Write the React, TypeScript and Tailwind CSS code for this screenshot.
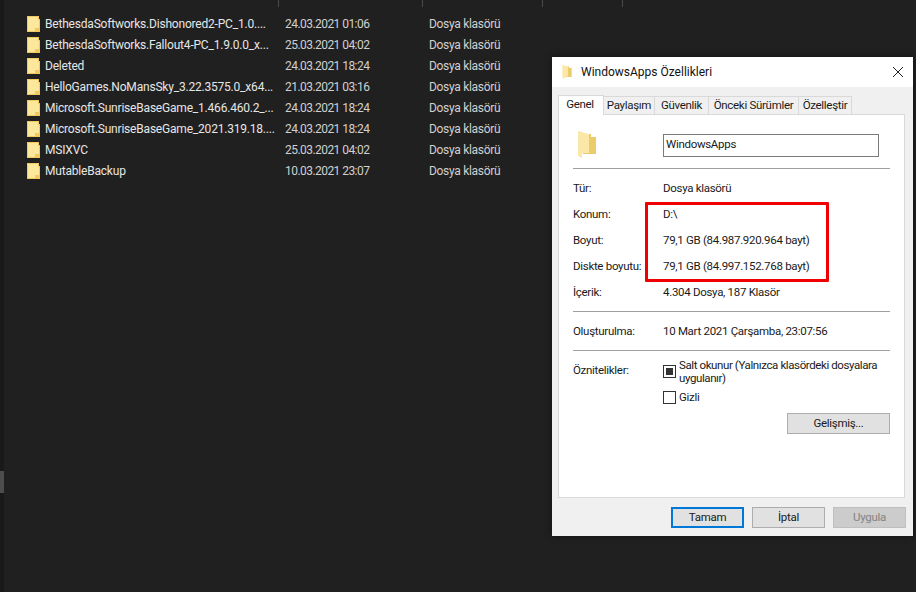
const font = "font-['Roboto','Noto_Sans',sans-serif]";

const files = [
  ["BethesdaSoftworks.Dishonored2-PC_1.0....", "24.03.2021 01:06"],
  ["BethesdaSoftworks.Fallout4-PC_1.9.0.0_x...", "25.03.2021 04:02"],
  ["Deleted", "24.03.2021 18:24"],
  ["HelloGames.NoMansSky_3.22.3575.0_x64...", "21.03.2021 03:16"],
  ["Microsoft.SunriseBaseGame_1.466.460.2_...", "24.03.2021 18:24"],
  ["Microsoft.SunriseBaseGame_2021.319.18....", "24.03.2021 18:24"],
  ["MSIXVC", "25.03.2021 04:02"],
  ["MutableBackup", "10.03.2021 23:07"],
];

function RowFolder() {
  return (
    <svg width="13" height="16" viewBox="0 0 13 16" className="shrink-0">
      <path d="M0 0H12V3H13V16H0Z" fill="#f3c95f" />
      <path d="M1 1H11V4H12V12H8V15H1Z" fill="#fde79a" />
    </svg>
  );
}

function SideFolder({ w, h }: { w: number; h: number }) {
  return (
    <svg width={w} height={h} viewBox="0 0 18 27">
      <path d="M5 3H13V6H18V23H5Z" fill="#eccb6c" />
      <path d="M0 0L11 3V22H4V27L0 25Z" fill="#fbe8a6" />
    </svg>
  );
}

function Info({ label, value, cls = "" }: { label: string; value: string; cls?: string }) {
  return (
    <div className={`flex items-center h-[26px] ${cls}`}>
      <span className="w-[90px] shrink-0 whitespace-nowrap">{label}</span>
      <span className="whitespace-nowrap">{value}</span>
    </div>
  );
}

function Tab({ label, w }: { label: string; w: string }) {
  return (
    <div className={`${w} h-[18px] flex items-center justify-center whitespace-nowrap bg-[#f0f0f0] border border-b-0 border-[#d9d9d9] -ml-px`}>
      {label}
    </div>
  );
}

function Btn({ label, cls = "" }: { label: string; cls?: string }) {
  return (
    <div className={`w-[73px] h-[21px] flex items-center justify-center ${cls}`}>{label}</div>
  );
}

export default function App() {
  return (
    <div className={`${font} relative flex w-[916px] h-[592px] overflow-hidden bg-[#202020] text-[12px]`}>
      <div className="w-[4px] h-full bg-[#191919] flex flex-col shrink-0">
        <div className="h-[471px]" />
        <div className="h-[22px] bg-[#4d4d4d]" />
      </div>
      <div className="flex-1 flex flex-col">
        <div className="flex h-[7px] shrink-0">
          <div className="w-[275px] border-r border-[#4a4a4a]" />
          <div className="w-[144px] border-r border-[#4a4a4a]" />
          <div className="w-[120px] border-r border-[#4a4a4a]" />
          <div className="w-[80px] border-r border-[#4a4a4a]" />
        </div>
        <div className="flex flex-col pt-[6px] pl-[23px]">
          {files.map(([name, date]) => (
            <div key={name} className="flex items-center h-[21px] text-[#e6e6e6]">
              <div className="w-[18px] flex"><RowFolder /></div>
              <span className="w-[240px] whitespace-nowrap tracking-[-0.2px]">{name}</span>
              <span className="w-[144px] text-[#d0d0d0] tracking-[-0.55px]">{date}</span>
              <span className="text-[#d0d0d0] tracking-[-0.3px]">Dosya klasörü</span>
            </div>
          ))}
        </div>
      </div>

      <div className="absolute left-[552px] top-[57px] w-[361px] h-[479px] flex flex-col bg-[#f0f0f0] text-[#1a1a1a] shadow-[0_0_6px_rgba(0,0,0,0.5)]">
        <div className="h-[30px] shrink-0 bg-white flex items-center pl-[10px] pr-[9px]">
          <SideFolder w={10} h={14} />
          <span className="ml-[9px] text-[#111]">WindowsApps Özellikleri</span>
          <svg width="12" height="12" viewBox="0 0 12 12" className="ml-auto" fill="none" stroke="#222" strokeWidth="1">
            <path d="M1 1L11 11M11 1L1 11" />
          </svg>
        </div>
        <div className="flex-1 flex flex-col pl-[6px] pr-[7px] pt-[7px] text-[11.5px] tracking-[-0.3px]">
          <div className="flex items-end h-[20px]">
            <div className="w-[46px] h-[20px] bg-white border border-b-0 border-[#d9d9d9] flex items-center justify-center z-10 -mb-px pb-[2px] pr-[2px]">Genel</div>
            <Tab label="Paylaşım" w="w-[52px]" />
            <Tab label="Güvenlik" w="w-[55px]" />
            <Tab label="Önceki Sürümler" w="w-[91px]" />
            <Tab label="Özelleştir" w="w-[54px]" />
          </div>
          <div className="h-[384px] w-[347px] bg-white border border-[#d9d9d9] px-[14px] flex flex-col">
            <div className="flex items-start h-[53px] pl-[5px]">
              <div className="w-[85px] pt-[16px]"><SideFolder w={18} h={27} /></div>
              <div className="mt-[19px] w-[216px] h-[23px] border border-[#7a7a7a] flex items-center pl-[2px] pb-[2px]">WindowsApps</div>
            </div>
            <div className="h-px bg-[#a0a0a0] w-[317px]" />
            <div className="h-[7px]" />
            <Info label="Tür:" value="Dosya klasörü" />
            <Info label="Konum:" value="D:\" />
            <Info label="Boyut:" value="79,1 GB (84.987.920.964 bayt)" />
            <Info label="Diskte boyutu:" value="79,1 GB (84.997.152.768 bayt)" />
            <Info label="İçerik:" value="4.304 Dosya, 187 Klasör" />
            <div className="h-[5px]" />
            <div className="h-px bg-[#a0a0a0] w-[317px]" />
            <Info label="Oluşturulma:" value="10 Mart 2021 Çarşamba, 23:07:56" cls="mt-[7px]" />
            <div className="h-px bg-[#a0a0a0] w-[317px] mt-[5px]" />
            <div className="flex mt-[8px]">
              <span className="w-[90px] shrink-0 mt-[3px]">Öznitelikler:</span>
              <div className="flex flex-col">
                <div className="flex items-start">
                  <div className="w-[13px] h-[13px] mt-[6px] border border-[#333] flex items-center justify-center shrink-0">
                    <div className="w-[7px] h-[7px] bg-[#333]" />
                  </div>
                  <span className="ml-[3px] w-[212px] leading-[13px] tracking-[-0.4px]">Salt okunur (Yalnızca klasördeki dosyalara uygulanır)</span>
                </div>
                <div className="flex items-center mt-[6px]">
                  <div className="w-[13px] h-[13px] border border-[#333] shrink-0" />
                  <span className="ml-[3px] leading-[13px]">Gizli</span>
                </div>
              </div>
            </div>
            <div className="flex justify-end mt-[9px] w-[317px]">
              <div className="w-[103px] h-[21px] bg-[#e1e1e1] border border-[#adadad] flex items-center justify-center">Gelişmiş...</div>
            </div>
          </div>
          <div className="flex justify-end gap-[8px] mt-[9px]">
            <Btn label="Tamam" cls="bg-[#e1e1e1] border-2 border-[#0078d7]" />
            <Btn label="İptal" cls="bg-[#e1e1e1] border border-[#adadad]" />
            <Btn label="Uygula" cls="bg-[#cccccc] border border-[#bfbfbf] text-[#838383]" />
          </div>
        </div>
      </div>

      <div className="absolute left-[645px] top-[202px] w-[184px] h-[80px] rounded-[1px] border-[3px] border-[#f00000]" />
    </div>
  );
}
